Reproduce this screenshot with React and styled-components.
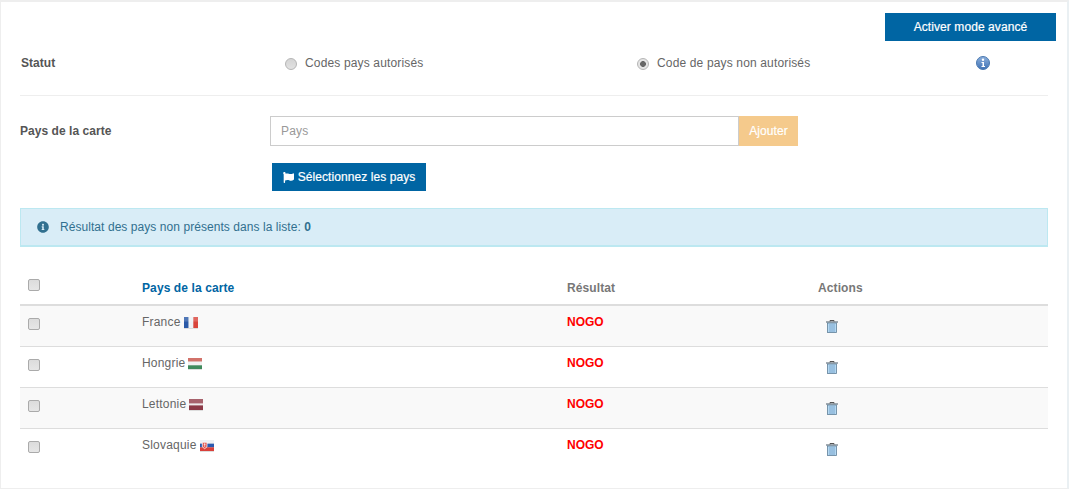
import React from "react";
import styled, { createGlobalStyle } from "styled-components";
import { FaFlag, FaInfoCircle } from "react-icons/fa";

const Global = createGlobalStyle`
  html, body { margin: 0; padding: 0; background: #fff; overflow: hidden; }
  body { font-family: "Liberation Sans", Arial, sans-serif; font-size: 12px; color: #555; }
  * { box-sizing: border-box; }
`;

const Page = styled.div`
  width: 1069px;
  height: 489px;
  overflow: hidden;
  padding: 11px 19px 0 19px;
  border-top: 2px solid #eee;
  border-left: 1px solid #eee;
  border-right: 2px solid #eaf0f3;
  border-bottom: 1px solid #eee;
`;

const TopBar = styled.div`
  display: flex;
  justify-content: flex-end;
  margin-right: -8px;
`;

const PrimaryButton = styled.button`
  display: inline-flex;
  align-items: center;
  justify-content: center;
  gap: 4px;
  width: ${(p) => p.$width}px;
  height: 28px;
  padding: 0;
  border: 0;
  background: #0065a3;
  color: #fff;
  font: 12px "Liberation Sans", Arial, sans-serif;
  letter-spacing: 0.08px;
  -webkit-text-stroke: 0.2px #fff;
`;

const StatusRow = styled.div`
  display: grid;
  grid-template-columns: 264px 352px 339px 1fr;
  align-items: center;
  height: 42px;
  padding-left: 1px;
  padding-top: 1px;
`;

const FieldLabel = styled.span`
  font-weight: bold;
  color: #555;
  letter-spacing: 0.05px;
`;

const RadioLabel = styled.label`
  display: flex;
  align-items: center;
  gap: 8px;
  color: #666;
  letter-spacing: 0.15px;
`;

const RadioMark = styled.span`
  width: 12px;
  height: 12px;
  margin-top: 3px;
  border-radius: 50%;
  background: ${(p) => (p.$on ? "radial-gradient(circle, #666 0 2.6px, #e4e4e4 3.2px)" : "linear-gradient(#d4d4d4, #e2e2e2)")};
  border: 1px solid #b5b5b5;
  flex: none;
`;

const Divider = styled.hr`
  height: 1px;
  margin: 12px 0 20px;
  border: 0;
  background: #eee;
`;

const CountryRow = styled.div`
  display: grid;
  grid-template-columns: 250px 469px 59px;
  align-items: center;
  height: 30px;
`;

const CountryInput = styled.input`
  width: 100%;
  height: 30px;
  padding: 0 10px;
  border: 1px solid #ccc;
  background: #fff;
  color: #555;
  font: 12px "Liberation Sans", Arial, sans-serif;
  letter-spacing: 0.2px;
  &::placeholder { color: #999; opacity: 1; }
`;

const AddButton = styled.button`
  height: 30px;
  padding: 0;
  border: 0;
  background: #f5ca8c;
  color: #fff;
  font: 12px "Liberation Sans", Arial, sans-serif;
  letter-spacing: 0.1px;
  -webkit-text-stroke: 0.2px #fff;
`;

const SelectRow = styled.div`
  display: flex;
  padding: 17px 0 17px 252px;
`;

const Notice = styled.div`
  display: flex;
  align-items: center;
  height: 39px;
  padding: 0 0 0 16px;
  gap: 11px;
  background: #d9edf7;
  border: 1px solid #bce8f1;
  border-bottom-width: 2px;
  color: #31708f;
  letter-spacing: 0.06px;
  b { font-weight: bold; }
`;

const Table = styled.div`
  margin-top: 22px;
`;

const Row = styled.div`
  display: grid;
  grid-template-columns: 114px 425px 251px 1fr;
  height: ${(p) => (p.$head ? "37px" : "41px")};
  padding-left: 8px;
  background: ${(p) => (p.$shade ? "#f9f9f9" : "#fff")};
  border-bottom: ${(p) => (p.$head ? "2px solid #ddd" : p.$last ? "0" : "1px solid #ddd")};
`;

const Cell = styled.div`
  display: flex;
  align-items: flex-start;
  gap: 3px;
  padding-top: ${(p) => p.$top ?? 9}px;
`;

const HeadText = styled.span`
  font-weight: bold;
  color: ${(p) => p.$color};
  letter-spacing: 0.1px;
`;

const Box = styled.span`
  display: block;
  width: 12px;
  height: 12px;
  border: 1px solid #aaa;
  border-radius: 2px;
  background: linear-gradient(#dcdcdc, #e6e6e6);
`;

const Nogo = styled.span`
  color: #f00;
  font-weight: bold;
`;

const CountryName = styled.span`
  color: #666;
  letter-spacing: 0.2px;
`;

const FlagSvg = styled.svg`
  display: block;
  width: 14px;
  height: 11px;
  margin-top: 2px;
  filter: drop-shadow(0 1px 0 #ddd);
`;

const Gloss = () => <rect width="15" height="5" fill="#fff" opacity="0.18" />;

const France = () => (
  <FlagSvg viewBox="0 0 15 12" preserveAspectRatio="none"><rect width="5" height="12" fill="#2a5aa8" /><rect x="5" width="5" height="12" fill="#eef2f6" /><rect x="10" width="5" height="12" fill="#d9453c" /><Gloss /></FlagSvg>
);
const Hungary = () => (
  <FlagSvg viewBox="0 0 15 12" preserveAspectRatio="none"><rect width="15" height="4" fill="#c9544a" /><rect y="4" width="15" height="4" fill="#f1f1f1" /><rect y="8" width="15" height="4" fill="#3f8a5c" /><Gloss /></FlagSvg>
);
const Latvia = () => (
  <FlagSvg viewBox="0 0 15 12" preserveAspectRatio="none"><rect width="15" height="5" fill="#94404c" /><rect y="5" width="15" height="2" fill="#efe9ea" /><rect y="7" width="15" height="5" fill="#8c3a47" /><Gloss /></FlagSvg>
);
const Slovakia = () => (
  <FlagSvg viewBox="0 0 15 12" preserveAspectRatio="none"><rect width="15" height="4" fill="#eef0f3" /><rect y="4" width="15" height="4" fill="#2a5ab0" /><rect y="8" width="15" height="4" fill="#d9403a" /><path d="M2.500 2.500h5v5l-2.500 2-2.500-2z" fill="#e0554f" stroke="#fff" strokeWidth=".8" /><path d="M5 3.500v4M4 4.700h2" stroke="#fff" strokeWidth=".7" /></FlagSvg>
);

const TrashSvg = styled.svg`
  display: block;
  width: 12px;
  height: 13px;
  margin: 5px 0 0 8px;
`;

const Trash = () => (
  <TrashSvg viewBox="0 0 12 13">
    <path d="M4 1.500V.5h4v1" fill="none" stroke="#555" strokeWidth="1" />
    <rect y="1.500" width="12" height="1" fill="#4a5a68" />
    <rect x="1.500" y="3" width="9" height="9.500" fill="#b4d8f2" stroke="#5f7f98" strokeWidth=".8" />
    <path d="M4 4v8M6 4v8M8 4v8" stroke="#6f9cc4" strokeWidth=".8" />
  </TrashSvg>
);

const InfoSvg = styled.svg`
  display: block;
  width: 14px;
  height: 14px;
  margin-top: 1px;
`;

const GlossyInfo = () => (
  <InfoSvg viewBox="0 0 14 14">
    <defs>
      <linearGradient id="infoFill" x1="0" y1="0" x2="0" y2="1">
        <stop offset="0" stopColor="#8db0dc" />
        <stop offset="1" stopColor="#3f72b5" />
      </linearGradient>
    </defs>
    <circle cx="7" cy="7" r="6.500" fill="url(#infoFill)" stroke="#4a79b0" />
    <circle cx="7" cy="3.800" r="1.200" fill="#fff" />
    <path d="M5.500 6h2.500v4h1v1H5.500v-1h1V7h-1z" fill="#fff" />
  </InfoSvg>
);

const rows = [
  { name: "France", flag: <France /> },
  { name: "Hongrie", flag: <Hungary /> },
  { name: "Lettonie", flag: <Latvia /> },
  { name: "Slovaquie", flag: <Slovakia /> },
];

export default function App() {
  return (
    <Page>
      <Global />
      <TopBar>
        <PrimaryButton $width={171}>Activer mode avancé</PrimaryButton>
      </TopBar>
      <StatusRow>
        <FieldLabel>Statut</FieldLabel>
        <RadioLabel><RadioMark />Codes pays autorisés</RadioLabel>
        <RadioLabel><RadioMark $on />Code de pays non autorisés</RadioLabel>
        <GlossyInfo />
      </StatusRow>
      <Divider />
      <CountryRow>
        <FieldLabel>Pays de la carte</FieldLabel>
        <CountryInput placeholder="Pays" />
        <AddButton>Ajouter</AddButton>
      </CountryRow>
      <SelectRow>
        <PrimaryButton $width={154}><FaFlag size={11} />Sélectionnez les pays</PrimaryButton>
      </SelectRow>
      <Notice>
        <FaInfoCircle size={12} color="#31708f" />
        <span>Résultat des pays non présents dans la liste: <b>0</b></span>
      </Notice>
      <Table>
        <Row $head>
          <Cell $top={10}><Box /></Cell>
          <Cell $top={12}><HeadText $color="#0065a3">Pays de la carte</HeadText></Cell>
          <Cell $top={12}><HeadText $color="#777">Résultat</HeadText></Cell>
          <Cell $top={12}><HeadText $color="#777">Actions</HeadText></Cell>
        </Row>
        {rows.map((r, i) => (
          <Row key={r.name} $shade={i % 2 === 0} $last={i === rows.length - 1}>
            <Cell $top={12}><Box /></Cell>
            <Cell><CountryName>{r.name}</CountryName>{r.flag}</Cell>
            <Cell><Nogo>NOGO</Nogo></Cell>
            <Cell><Trash /></Cell>
          </Row>
        ))}
      </Table>
    </Page>
  );
}
